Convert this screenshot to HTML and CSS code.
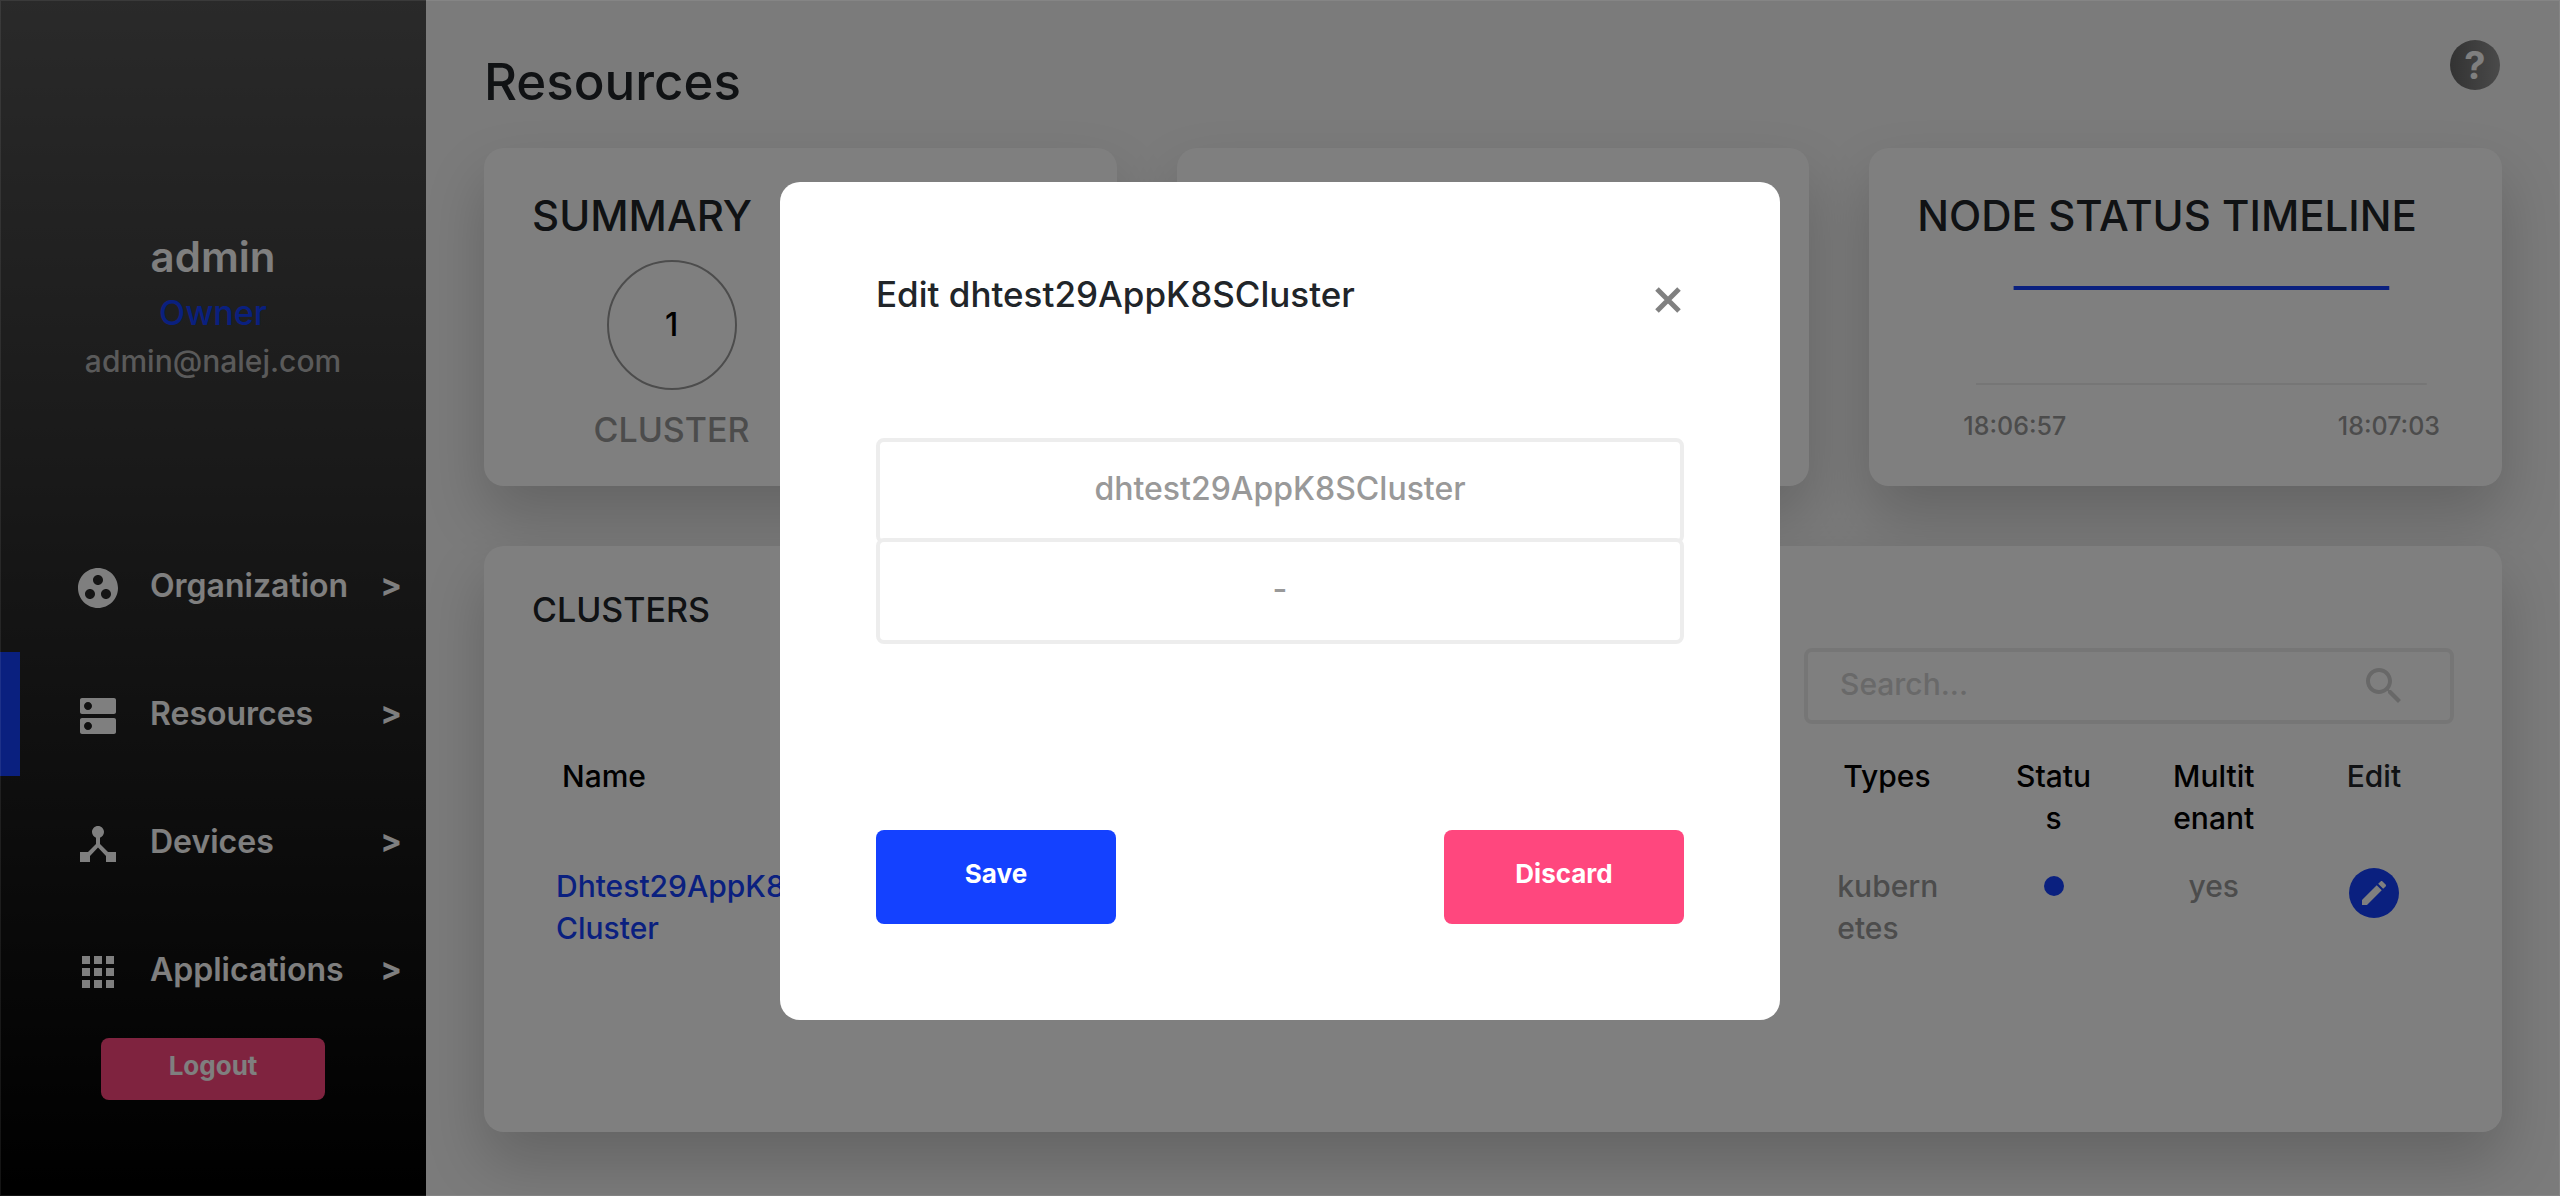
FILE: index.html
```html
<!DOCTYPE html>
<html lang="en">
<head>
<meta charset="utf-8">
<title>Resources</title>
<link rel="stylesheet" href="styles.css">
</head>
<body>
<div class="app">
  <aside class="sidebar">
    <div class="user">
      <p class="user-name">admin</p>
      <p class="user-role">Owner</p>
      <p class="user-mail">admin@nalej.com</p>
    </div>
    <nav class="nav">
      <a class="nav-item" href="#organization">
        <svg class="nav-icon" viewBox="0 0 24 24"><path d="M12 2C6.48 2 2 6.48 2 12s4.480 10 10 10 10-4.480 10-10S17.520 2 12 2zM8 17.500c-1.380 0-2.500-1.120-2.500-2.500s1.120-2.500 2.500-2.500 2.500 1.120 2.500 2.500-1.120 2.500-2.500 2.500zM9.500 8c0-1.380 1.120-2.500 2.500-2.500s2.500 1.120 2.500 2.500-1.120 2.500-2.500 2.500S9.500 9.380 9.500 8zm6.500 9.500c-1.380 0-2.500-1.120-2.500-2.500s1.120-2.500 2.500-2.500 2.500 1.120 2.500 2.500-1.120 2.500-2.500 2.500z"/></svg>
        <span class="nav-label">Organization</span><span class="nav-arrow">&gt;</span>
      </a>
      <a class="nav-item active" href="#resources">
        <svg class="nav-icon" viewBox="0 0 24 24"><path d="M20 13H4c-.55 0-1 .45-1 1v6c0 .55.45 1 1 1h16c.55 0 1-.45 1-1v-6c0-.55-.45-1-1-1zM7 19c-1.100 0-2-.9-2-2s.9-2 2-2 2 .9 2 2-.9 2-2 2zM20 3H4c-.55 0-1 .45-1 1v6c0 .55.45 1 1 1h16c.55 0 1-.45 1-1V4c0-.55-.45-1-1-1zM7 9c-1.100 0-2-.9-2-2s.9-2 2-2 2 .9 2 2-.9 2-2 2z"/></svg>
        <span class="nav-label">Resources</span><span class="nav-arrow">&gt;</span>
      </a>
      <a class="nav-item" href="#devices">
        <svg class="nav-icon" viewBox="0 0 24 24"><path d="M17 16l-4-4V8.820C14.160 8.400 15 7.300 15 6c0-1.660-1.340-3-3-3S9 4.340 9 6c0 1.300.84 2.400 2 2.820V12l-4 4H3v5h5v-3.050l4-4.200 4 4.200V21h5v-5h-4z"/></svg>
        <span class="nav-label">Devices</span><span class="nav-arrow">&gt;</span>
      </a>
      <a class="nav-item" href="#applications">
        <svg class="nav-icon" viewBox="0 0 24 24"><path d="M4 8h4V4H4v4zm6 12h4v-4h-4v4zm-6 0h4v-4H4v4zm0-6h4v-4H4v4zm6 0h4v-4h-4v4zm6-10v4h4V4h-4zm-6 4h4V4h-4v4zm6 6h4v-4h-4v4zm0 6h4v-4h-4v4z"/></svg>
        <span class="nav-label">Applications</span><span class="nav-arrow">&gt;</span>
      </a>
    </nav>
    <button class="btn logout" type="button">Logout</button>
  </aside>

  <main class="main">
    <header class="page-head">
      <h1>Resources</h1>
      <button class="help" type="button" aria-label="Help">?</button>
    </header>

    <div class="cards">
      <section class="card">
        <h2>SUMMARY</h2>
        <div class="stat">
          <span class="stat-ring">1</span>
          <span class="stat-label">CLUSTER</span>
        </div>
      </section>
      <section class="card"></section>
      <section class="card">
        <h2>NODE STATUS TIMELINE</h2>
        <svg class="chart">
          <line class="chart-series" x1="18%" x2="88%" y1="48" y2="48"/>
          <line class="chart-axis" x1="11%" x2="95%" y1="144" y2="144"/>
        </svg>
        <div class="chart-labels"><span>18:06:57</span><span>18:07:03</span></div>
      </section>
    </div>

    <section class="card clusters">
      <h3>CLUSTERS</h3>
      <div class="search">
        <input type="text" placeholder="Search..." aria-label="Search clusters">
        <svg class="search-icon" viewBox="0 0 24 24"><path d="M15.500 14h-.79l-.28-.27C15.410 12.590 16 11.110 16 9.500 16 5.910 13.090 3 9.500 3S3 5.910 3 9.500 5.910 16 9.500 16c1.610 0 3.090-.59 4.230-1.570l.27.28v.79l5 4.990L20.490 19l-4.990-5zm-6 0C7.010 14 5 11.990 5 9.500S7.010 5 9.500 5 14 7.010 14 9.500 11.990 14 9.500 14z"/></svg>
      </div>
      <table>
        <thead>
          <tr><th class="col-name">Name</th><th>Types</th><th class="mid">Statu<br>s</th><th class="mid">Multit<br>enant</th><th class="mid col-edit">Edit</th></tr>
        </thead>
        <tbody>
          <tr>
            <td><a class="cluster-link" href="#cluster">Dhtest29AppK8S<br>Cluster</a></td>
            <td>kubern<br>etes</td>
            <td class="mid"><span class="dot" role="img" aria-label="Online"></span></td>
            <td class="mid">yes</td>
            <td class="mid">
              <button class="edit" type="button" aria-label="Edit cluster"><svg viewBox="0 0 24 24"><path d="M3 17.250V21h3.750L17.810 9.940l-3.750-3.750L3 17.250zM20.710 7.040c.39-.39.39-1.020 0-1.410l-2.340-2.340c-.39-.39-1.020-.39-1.410 0l-1.830 1.830 3.750 3.750 1.830-1.830z"/></svg></button>
            </td>
          </tr>
        </tbody>
      </table>
    </section>
  </main>
</div>

<div class="overlay">
  <form class="modal" role="dialog" aria-labelledby="modal-title">
    <div class="modal-head">
      <h4 id="modal-title">Edit dhtest29AppK8SCluster</h4>
      <button class="close" type="button" aria-label="Close"><svg viewBox="0 0 28 28"><path d="M3 3L25 25M25 3L3 25"/></svg></button>
    </div>
    <input class="field" type="text" placeholder="dhtest29AppK8SCluster" aria-label="Cluster name">
    <input class="field" type="text" placeholder="-" aria-label="Cluster description">
    <div class="modal-actions">
      <button class="btn save" type="submit">Save</button>
      <button class="btn discard" type="button">Discard</button>
    </div>
  </form>
</div>
</body>
</html>
```

FILE: styles.css
```css
:root {
  --blue: #1441ff;
  --pink: #ff477e;
  --ink: #212529;
  --grey: #999;
  --line: #ededed;
}

* { box-sizing: border-box; }

body {
  margin: 0;
  font-family: Inter, "Liberation Sans", sans-serif;
  font-size: 30px;
  font-weight: 500;
  color: var(--ink);
  background: #f6f6f6;
}

h1, h2, h3, h4, p { margin: 0; font-weight: 500; }
button, input { font-family: inherit; font-weight: inherit; }
button { border: 0; padding: 0; cursor: pointer; }
a { text-decoration: none; }

.app { display: flex; min-height: 100vh; }

/* Sidebar */
.sidebar {
  position: relative;
  z-index: 1;
  flex: 0 0 426px;
  display: flex;
  flex-direction: column;
  align-items: center;
  padding: 233px 0 40px;
  background: linear-gradient(#545454, #000);
  color: #fff;
}
.user { text-align: center; line-height: 48px; }
.user-name { margin-bottom: 8px; font-size: 42px; font-weight: 600; }
.user-role { font-size: 34px; color: var(--blue); }
.user-mail { color: #b4b4b4; }

.nav {
  align-self: stretch;
  display: flex;
  flex-direction: column;
  gap: 4px;
  margin: 139px 0 6px;
}
.nav-item {
  display: flex;
  align-items: center;
  height: 124px;
  padding: 0 24px 0 54px;
  border-left: 20px solid transparent;
  font-size: 32px;
  color: #fff;
}
.nav-item.active { border-left-color: var(--blue); }
.nav-icon { width: 48px; height: 48px; margin: 4px 28px 0 0; fill: currentColor; }
.nav-label { flex: 1; padding-bottom: 2px; font-weight: 600; }
.nav-arrow { padding-bottom: 4px; font-weight: 700; }

.btn {
  border-radius: 8px;
  padding-bottom: 8px;
  font-size: 26px;
  font-weight: 700;
  color: #fff;
}
.logout { width: 224px; height: 62px; background: var(--pink); }

/* Main column */
.main {
  flex: 1;
  min-width: 0;
  display: flex;
  flex-direction: column;
  padding: 40px 58px 64px;
}
.page-head { display: flex; justify-content: space-between; align-items: flex-start; }
.page-head h1 { margin: 12px 0 36px; font-size: 51px; line-height: 60px; }
.help {
  width: 50px;
  height: 50px;
  margin-right: 2px;
  border-radius: 50%;
  background: linear-gradient(90deg, #666, #949494);
  color: #fff;
  font-size: 38px;
  font-weight: 700;
}

.cards { display: grid; grid-template-columns: repeat(3, 1fr); gap: 60px; margin-bottom: 60px; }
.card {
  padding: 44px 48px 36px;
  border-radius: 20px;
  background: #fff;
  box-shadow: 0 30px 60px rgba(0, 0, 0, .19);
}
.card h2 { font-size: 42px; line-height: 48px; white-space: nowrap; }

.stat {
  display: flex;
  flex-direction: column;
  align-items: center;
  gap: 20px;
  width: 52%;
  margin-top: 20px;
  font-size: 34px;
  line-height: 40px;
}
.stat-ring {
  display: grid;
  place-items: center;
  width: 130px;
  height: 130px;
  border: 2px solid var(--grey);
  border-radius: 50%;
  font-size: 32px;
  color: #000;
}
.stat-label { color: var(--grey); }

.chart { display: block; width: 100%; height: 170px; }
.chart-series { stroke: var(--blue); stroke-width: 4; }
.chart-axis { stroke: var(--line); stroke-width: 2; }
.chart-labels {
  display: flex;
  justify-content: space-between;
  padding: 0 14px 0 46px;
  font-size: 25px;
  line-height: 32px;
  color: var(--grey);
}

/* Cluster list */
.clusters { flex: 1; }
.clusters h3 { font-size: 34px; line-height: 40px; }
.search {
  display: flex;
  align-items: center;
  width: 650px;
  max-width: 100%;
  height: 76px;
  margin: 18px 0 31px auto;
  padding: 0 42px 0 32px;
  border: 4px solid var(--line);
  border-radius: 8px;
}
.search input {
  flex: 1;
  min-width: 0;
  padding: 0 0 4px;
  border: 0;
  outline: 0;
  background: none;
  font-size: 30px;
}
.search input::placeholder { color: #d2d2d2; opacity: 1; }
.search-icon { width: 48px; height: 48px; fill: #d0d0d0; }

table {
  width: 100%;
  table-layout: fixed;
  border-collapse: collapse;
  font-size: 30px;
  line-height: 42px;
}
th, td { padding: 0 0 0 24px; text-align: left; vertical-align: top; font-weight: 500; }
th { padding-left: 30px; color: #000; }
td { padding-top: 26px; color: var(--grey); }
.col-name { width: 66.666%; }
.col-edit { color: var(--ink); }
.mid { padding-left: 0; text-align: center; }
.cluster-link { color: var(--blue); }
.dot {
  display: block;
  width: 20px;
  height: 20px;
  margin: 11px auto 0;
  border-radius: 50%;
  background: var(--blue);
}
.edit {
  display: grid;
  place-items: center;
  width: 50px;
  height: 50px;
  margin: 3px auto 0;
  border-radius: 50%;
  background: var(--blue);
}
.edit svg { width: 32px; height: 32px; fill: #fff; }

/* Edit dialog */
.overlay {
  position: fixed;
  inset: 0;
  z-index: 2;
  display: flex;
  align-items: center;
  justify-content: center;
  padding-top: 6px;
  background: rgba(0, 0, 0, .5);
  box-shadow: inset 0 0 0 1px rgba(255, 255, 255, .08);
}
.modal {
  display: flex;
  flex-direction: column;
  width: 1000px;
  max-width: 100%;
  padding: 92px 96px 96px;
  border-radius: 20px;
  background: #fff;
}
.modal-head {
  display: flex;
  justify-content: space-between;
  align-items: flex-end;
  margin-bottom: 124px;
}
.modal-head h4 { font-size: 35px; line-height: 40px; }
.close { width: 30px; height: 28px; background: none; }
.close svg { display: block; width: 28px; height: 28px; stroke: #808080; stroke-width: 5; }
.field {
  height: 106px;
  padding: 0 32px 6px;
  border: 4px solid var(--line);
  border-radius: 8px;
  background: #fff;
  font-size: 32px;
  text-align: center;
}
.field + .field { margin-top: -6px; }
.field::placeholder { color: var(--grey); opacity: 1; }
.modal-actions { display: flex; justify-content: space-between; margin-top: 186px; }
.modal-actions .btn { width: 240px; height: 94px; }
.save { background: var(--blue); }
.discard { background: var(--pink); }
```
